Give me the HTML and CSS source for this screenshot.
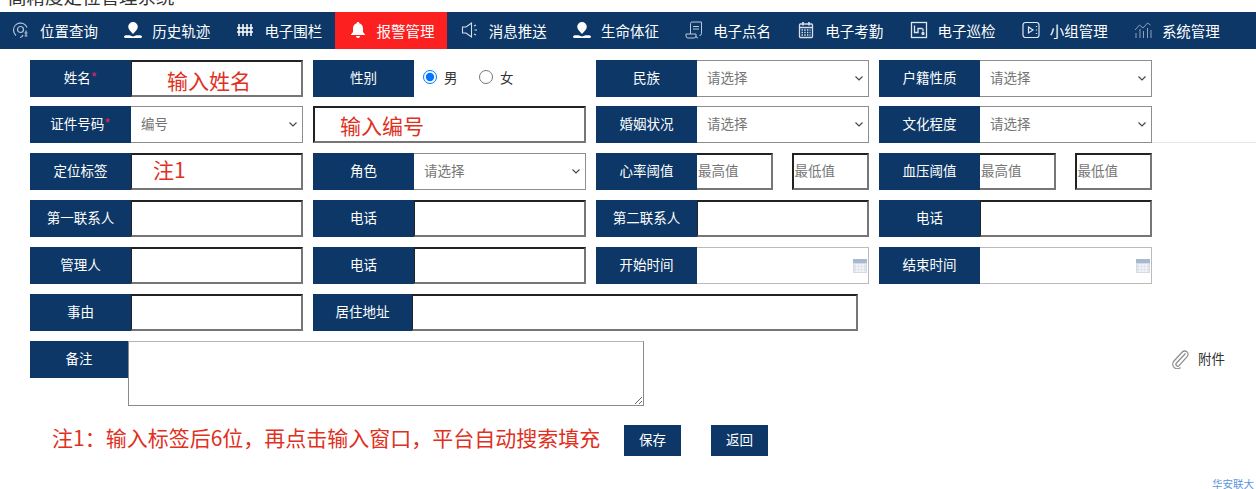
FILE: index.html
```html
<!DOCTYPE html>
<html>
<head>
    <title>高精度定位管理系统</title>
    <link rel="stylesheet" href="styles.css">
</head>
<body>
    <h1 class="site-title">高精度定位管理系统</h1>

    <div class="nav">
        <a class="nav-item">
            <svg class="nav-icon" viewBox="0 0 18 18" fill="none" stroke="#b4c5d8" stroke-width="1.200"><path d="M4 14.500C2.300 12.800 1.500 11 1.500 9A7 7 0 0 1 15 6.500"/><circle cx="8.500" cy="8.500" r="3"/><path d="M8 16.500c2 0 2.500-1 3-2.500M14 9.500v6M12.500 12h3M12.500 15h3"/></svg>
            <span>位置查询</span>
        </a>
        <a class="nav-item">
            <svg class="nav-icon" viewBox="0 0 18 18" fill="#fff"><path d="M9 1a4.800 4.800 0 0 1 4.800 4.800c0 2.700-2.800 5.200-4.800 7.200-2-2-4.800-4.500-4.800-7.200A4.800 4.800 0 0 1 9 1z"/><path d="M0 15.800c0-1 1-1.500 3-1.500h2.500L9 15.500l3.500-1.200H15c2 0 3 .5 3 1.500s-1 1.200-2 1.200H2c-1 0-2-.2-2-1.200z"/></svg>
            <span>历史轨迹</span>
        </a>
        <a class="nav-item">
            <svg class="nav-icon" viewBox="0 0 18 18" fill="none" stroke="#fff" stroke-width="1.500"><path d="M3 3v12M7 3v12M11 3v12M15 3v12M1 7h16M1 11h16"/></svg>
            <span>电子围栏</span>
        </a>
        <a class="nav-item active">
            <svg class="nav-icon" viewBox="0 0 18 18" fill="#fff"><path d="M9 1c.8 0 1.300.5 1.300 1.200C12.800 3 14 5 14 7.500V11l2 2.500v.5H2v-.5L4 11V7.500C4 5 5.200 3 7.700 2.200 7.700 1.500 8.200 1 9 1z"/><path d="M7 15h4a2 2 0 0 1-4 0z"/></svg>
            <span>报警管理</span>
        </a>
        <a class="nav-item">
            <svg class="nav-icon" viewBox="0 0 18 18" fill="none" stroke="#d5dfea" stroke-width="1.100"><path d="M1.500 6h3.500l5.500-4v14l-5.500-4H1.500z"/><path d="M13 5l2-1M13.500 9H16M13 13l2 1"/></svg>
            <span>消息推送</span>
        </a>
        <a class="nav-item">
            <svg class="nav-icon" viewBox="0 0 18 18" fill="#fff"><path d="M9 1a4.800 4.800 0 0 1 4.800 4.800c0 2.700-2.800 5.200-4.800 7.200-2-2-4.800-4.500-4.800-7.200A4.800 4.800 0 0 1 9 1z"/><path d="M0 15.800c0-1 1-1.500 3-1.500h2.500L9 15.500l3.500-1.200H15c2 0 3 .5 3 1.500s-1 1.200-2 1.200H2c-1 0-2-.2-2-1.200z"/></svg>
            <span>生命体征</span>
        </a>
        <a class="nav-item">
            <svg class="nav-icon" viewBox="0 0 18 18" fill="none" stroke="#b9c9da" stroke-width="1"><path d="M5.500 13V2.500A1.500 1.500 0 0 1 7 1h9.500v11.500a2 2 0 0 1-2 2"/><path d="M8 5.500h6M8 8h6"/><path d="M1 13h10v2a2 2 0 0 1-2 2H3a2 2 0 0 1-2-2zM11 15a2 2 0 0 0 2 2"/></svg>
            <span>电子点名</span>
        </a>
        <a class="nav-item">
            <svg class="nav-icon" viewBox="0 0 18 18" fill="none" stroke="#d5dfea" stroke-width="1.300"><rect x="2.500" y="3" width="13" height="13.500" rx="1"/><path d="M2.500 6.500h13M6 1v3.500M12 1v3.500" stroke-width="1.700"/><path d="M4.500 9h9M4.500 11.500h9M4.500 14h9" stroke-dasharray="1.500 1.200" stroke-width="1.500"/></svg>
            <span>电子考勤</span>
        </a>
        <a class="nav-item">
            <svg class="nav-icon" viewBox="0 0 18 18" fill="none" stroke="#dfe7f0" stroke-width="1.300"><rect x="1.500" y="1.500" width="15" height="15"/><path d="M4.500 4.500v7h3.500V7.500h4.500"/><circle cx="13" cy="12.500" r="1"/><path d="M13 7.500v3"/></svg>
            <span>电子巡检</span>
        </a>
        <a class="nav-item">
            <svg class="nav-icon" viewBox="0 0 18 18" fill="none" stroke="#dfe7f0" stroke-width="1.200"><rect x="1" y="1.500" width="16" height="15" rx="2.500"/><path d="M6.500 6l4.500 3-4.500 3z"/><path d="M14.500 5v1M14.500 8.500v1M14.500 12v1"/></svg>
            <span>小组管理</span>
        </a>
        <a class="nav-item">
            <svg class="nav-icon" viewBox="0 0 18 18" fill="none" stroke="#8ea2b8" stroke-width="1"><path d="M1 9l4.500-5L9 7l4.500-5 3 2"/><path d="M2 17v-5M6 17V8M9.500 17v-7M13.500 17V7M17 17V9"/></svg>
            <span>系统管理</span>
        </a>
    </div>

    <form class="main-form">
        <div class="row first-row">
            <div class="field">
                <label>姓名<span class="required">*</span></label>
                <input class="note-input" type="text" value="输入姓名">
            </div>
            <div class="field">
                <label>性别</label>
                <div class="radios">
                    <input type="radio" name="sex" checked><span>男</span>
                    <input type="radio" name="sex"><span>女</span>
                </div>
            </div>
            <div class="field">
                <label>民族</label>
                <select><option>请选择</option></select>
            </div>
            <div class="field">
                <label>户籍性质</label>
                <select><option>请选择</option></select>
            </div>
        </div>

        <div class="row">
            <div class="field">
                <label>证件号码<span class="required">*</span></label>
                <select><option>编号</option></select>
            </div>
            <div class="field wide-input">
                <input class="note-input" type="text" value="输入编号">
            </div>
            <div class="field">
                <label>婚姻状况</label>
                <select><option>请选择</option></select>
            </div>
            <div class="field">
                <label>文化程度</label>
                <select><option>请选择</option></select>
            </div>
            <div class="rule"></div>
        </div>

        <div class="row">
            <div class="field">
                <label>定位标签</label>
                <input class="note-input tag-input" type="text" value="注1">
            </div>
            <div class="field">
                <label>角色</label>
                <select><option>请选择</option></select>
            </div>
            <div class="field">
                <label>心率阈值</label>
                <div class="range">
                    <input type="text" placeholder="最高值">
                    <input type="text" placeholder="最低值">
                </div>
            </div>
            <div class="field">
                <label>血压阈值</label>
                <div class="range">
                    <input type="text" placeholder="最高值">
                    <input type="text" placeholder="最低值">
                </div>
            </div>
        </div>

        <div class="row">
            <div class="field"><label>第一联系人</label><input type="text"></div>
            <div class="field"><label>电话</label><input type="text"></div>
            <div class="field"><label>第二联系人</label><input type="text"></div>
            <div class="field"><label>电话</label><input type="text"></div>
        </div>

        <div class="row">
            <div class="field"><label>管理人</label><input type="text"></div>
            <div class="field"><label>电话</label><input type="text"></div>
            <div class="field">
                <label>开始时间</label>
                <div class="date-box">
                    <svg class="cal-icon" viewBox="0 0 14 14"><rect width="14" height="14" fill="#d5dbe6"/><rect width="14" height="4" fill="#a9b7d0"/><path d="M1 6h12M1 9h12M1 12h12M4 5v8M7 5v8M10 5v8" stroke="#fff" stroke-width=".8"/></svg>
                </div>
            </div>
            <div class="field">
                <label>结束时间</label>
                <div class="date-box">
                    <svg class="cal-icon" viewBox="0 0 14 14"><rect width="14" height="14" fill="#d5dbe6"/><rect width="14" height="4" fill="#a9b7d0"/><path d="M1 6h12M1 9h12M1 12h12M4 5v8M7 5v8M10 5v8" stroke="#fff" stroke-width=".8"/></svg>
                </div>
            </div>
        </div>

        <div class="row">
            <div class="field"><label>事由</label><input type="text"></div>
            <div class="field address">
                <label>居住地址</label>
                <input type="text">
            </div>
        </div>

        <div class="row remark-row">
            <label class="remark-label">备注</label>
            <textarea></textarea>
            <div class="attach">
                <svg class="clip-icon" viewBox="0 0 18 20" fill="none" stroke="#8f8f8f" stroke-width="1.300"><path d="M14.500 4.500L5.500 14a1.800 1.800 0 0 0 2.600 2.600l8-9a3.300 3.300 0 0 0-4.800-4.600L3 12a4.600 4.600 0 0 0 6.500 6.500"/></svg>
                <span>附件</span>
            </div>
        </div>

        <div class="actions">
            <span class="tip">注1：输入标签后6位，再点击输入窗口，平台自动搜索填充</span>
            <button type="button">保存</button>
            <button type="button">返回</button>
        </div>
    </form>

    <div class="footer">华安联大</div>
</body>
</html>
```

FILE: styles.css
```css
body {
    margin: 0;
    font-family: "Noto Sans CJK SC", "Liberation Sans", sans-serif;
    font-size: 13.5px;
    background: #fff;
    color: #333;
}
.site-title {
    margin: -8px 0 12px 8px;
    font-size: 18.500px;
    font-weight: normal;
    line-height: 8px;
    color: #333;
}
.nav {
    display: flex;
    height: 37px;
    background: #0c3767;
}
.nav-item {
    display: flex;
    align-items: center;
    width: 112.200px;
    flex: none;
    padding-left: 14px;
    box-sizing: border-box;
    color: #fff;
    font-size: 14.500px;
    white-space: nowrap;
}
.nav-item:first-child {
    margin-left: -2px;
}
.nav-item span {
    padding-bottom: 1px;
}
.nav-item.active {
    background: #fd2020;
}
.nav-icon {
    width: 18px;
    height: 18px;
    margin: 0 10px 1px 0;
    flex: none;
}
.main-form {
    padding: 11px 0 0 30px;
}
.row {
    display: flex;
    gap: 10px;
    height: 37px;
    margin-bottom: 10px;
}
.first-row {
    margin-bottom: 9px;
}
.field {
    display: flex;
    width: 273px;
    flex: none;
}
.field label,
.remark-label {
    width: 101px;
    flex: none;
    display: flex;
    align-items: center;
    justify-content: center;
    box-sizing: border-box;
    padding-bottom: 3px;
    background: #0c3767;
    color: #fff;
}
.required {
    color: #e0245e;
}
.field input[type="text"] {
    flex: 1;
    min-width: 0;
    box-sizing: border-box;
    height: 37px;
    padding: 0 0 3px 1px;
    border: 2px solid #767676;
    border-top-color: #222;
    border-left-color: #222;
    font-family: inherit;
    font-size: 13.5px;
    background: #fff;
    outline: none;
}
.field > input[type="text"] {
    border-left-width: 1px;
}
.field input.note-input {
    padding: 3px 0 0 35px;
    color: #e0301e;
    font-size: 21px;
}
.wide-input input.note-input {
    padding: 0 0 0 25px;
    border-left-width: 2px;
}
.field input.tag-input {
    padding: 0 0 5px 21px;
}
.field select {
    flex: 1;
    min-width: 0;
    height: 37px;
    padding: 0 0 3px 10px;
    border: 1px solid #8d8d8d;
    border-left: none;
    border-radius: 0;
    appearance: none;
    background: #fff url("data:image/svg+xml,%3Csvg xmlns='http://www.w3.org/2000/svg' width='8' height='5'%3E%3Cpath d='M.5.5l3.500 3.500L7.500.5' fill='none' stroke='%23444' stroke-width='1.100'/%3E%3C/svg%3E") no-repeat right 5px center;
    color: #757575;
    font-family: inherit;
    font-size: 13.5px;
}
.radios {
    display: flex;
    align-items: center;
    padding: 0 0 3px 9px;
    color: #333;
}
.radios input {
    margin: 0 7px 0 0;
    width: 14px;
    height: 14px;
}
.radios span {
    width: 14px;
    margin-right: 21px;
}
.range {
    display: flex;
    flex: 1;
    min-width: 0;
    gap: 19px;
}
.range input:first-child {
    border-left-width: 0;
}
.range input::placeholder {
    color: #757575;
}
.date-box {
    flex: 1;
    display: flex;
    align-items: center;
    justify-content: flex-end;
    padding-right: 1px;
    border: 1px solid #bbb;
    border-left: none;
    box-sizing: border-box;
}
.cal-icon {
    width: 14px;
    height: 14px;
}
.address {
    width: 545px;
}
.address label {
    width: 99px;
}
.rule {
    flex: 1;
    align-self: flex-end;
    margin-left: -10px;
    border-bottom: 1px solid #e6e6e6;
}
.remark-row {
    height: 65px;
    gap: 0;
    margin-bottom: 19px;
}
.remark-label {
    width: 98px;
    height: 37px;
}
textarea {
    width: 516px;
    height: 65px;
    box-sizing: border-box;
    border: 1px solid #8a8a8a;
    border-top-color: #b5b5b5;
    outline: none;
}
.attach {
    display: flex;
    align-items: center;
    align-self: flex-start;
    margin: 8px 0 0 527px;
    height: 20px;
    white-space: nowrap;
}
.attach span {
    padding-bottom: 3px;
}
.clip-icon {
    width: 18px;
    height: 20px;
    margin-right: 9px;
}
.actions {
    display: flex;
    align-items: flex-start;
    padding-left: 22px;
}
.tip {
    width: 572px;
    color: #e0301e;
    font-size: 21px;
    line-height: 25px;
    white-space: nowrap;
}
button {
    width: 57px;
    height: 31px;
    margin-right: 30px;
    padding: 0 0 3px;
    border: none;
    background: #0c3767;
    color: #fff;
    font-family: inherit;
    font-size: 13.5px;
}
.footer {
    position: absolute;
    right: 2px;
    top: 478px;
    color: #5b95e0;
    font-size: 10.500px;
    line-height: 11px;
}
```
